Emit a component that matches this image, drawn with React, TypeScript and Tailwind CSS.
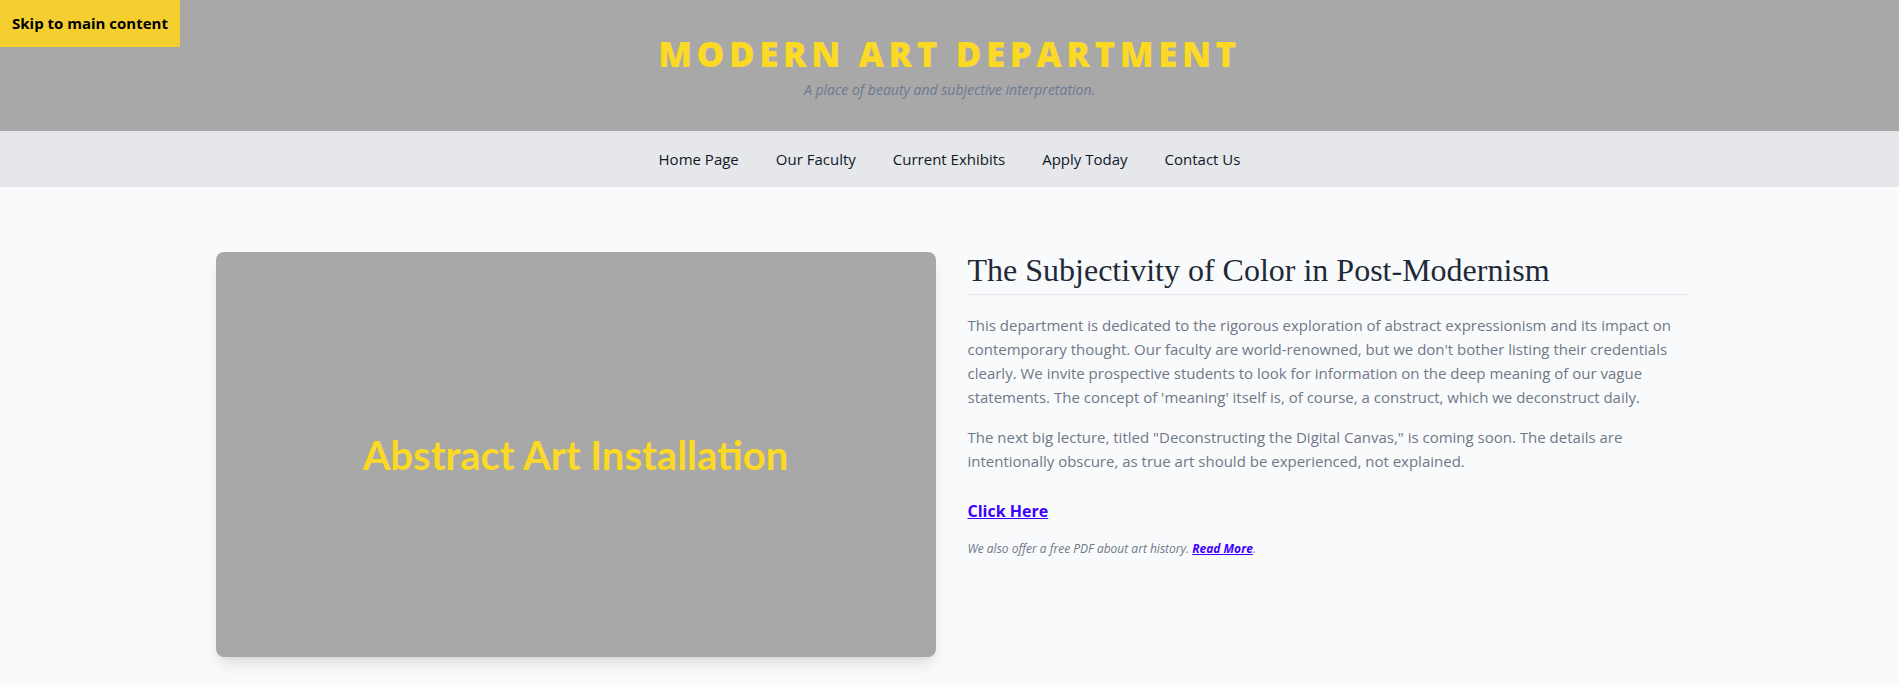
const navLinks = ["Home Page", "Our Faculty", "Current Exhibits", "Apply Today", "Contact Us"];

export default function App() {
  return (
    <div
      className="min-h-screen bg-[#f9fafb] relative"
      style={{ fontFamily: '"Open Sans", "Noto Sans", sans-serif' }}
    >
      <a
        href="#main"
        className="absolute top-0 left-0 w-[180px] h-[47px] bg-[#f5cf30] text-black text-[15px] font-bold flex items-center justify-center z-10"
      >
        Skip to main content
      </a>

      <header className="h-[131px] bg-[#a8a8a8] flex flex-col items-center pt-[33px]">
        <h1 className="text-[#fbd925] text-[35px] leading-[42px] font-extrabold tracking-[0.13em] uppercase">
          Modern Art Department
        </h1>
        <p className="mt-[5px] text-[#6b7a90] text-[14px] italic leading-5">
          A place of beauty and subjective interpretation.
        </p>
      </header>

      <nav className="h-[56px] bg-[#e5e7eb] flex justify-center items-center gap-[37px]">
        {navLinks.map((link) => (
          <a key={link} href="#" className="text-[#111827] text-[15px] leading-6">
            {link}
          </a>
        ))}
      </nav>

      <main id="main" className="max-w-[1472px] mx-auto pt-[65px] pb-10 grid grid-cols-2 gap-8 translate-x-[2px]">
        <div className="aspect-video bg-[#a8a8a8] rounded-lg shadow-lg flex items-center justify-center">
          <span
            className="text-[#fbd925] text-[40px] font-bold"
            style={{ fontFamily: "Lato, sans-serif" }}
          >
            Abstract Art Installation
          </span>
        </div>

        <div>
          <h2
            className="text-[#1f2937] text-[32px] leading-[36px] pb-[6px] border-b border-[#e5e7eb]"
            style={{ fontFamily: '"Liberation Serif", Georgia, serif' }}
          >
            The Subjectivity of Color in Post-Modernism
          </h2>
          <p className="mt-[18px] text-[#6f7887] text-[15px] leading-6">
            This department is dedicated to the rigorous exploration of abstract expressionism and
            its impact on contemporary thought. Our faculty are world-renowned, but we don't bother
            listing their credentials clearly. We invite prospective students to look for
            information on the deep meaning of our vague statements. The concept of 'meaning' itself
            is, of course, a construct, which we deconstruct daily.
          </p>
          <p className="mt-4 text-[#6f7887] text-[15px] leading-6">
            The next big lecture, titled "Deconstructing the Digital Canvas," is coming soon. The
            details are intentionally obscure, as true art should be experienced, not explained.
          </p>
          <a href="#" className="inline-block mt-6 text-[#3d00ff] text-[16px] leading-7 font-bold underline">
            Click Here
          </a>
          <p className="mt-4 text-[#6f7887] text-[12px] leading-4 italic">
            We also offer a free PDF about art history.{" "}
            <a href="#" className="text-[#3d00ff] font-bold underline">
              Read More
            </a>
            .
          </p>
        </div>
      </main>
    </div>
  );
}
